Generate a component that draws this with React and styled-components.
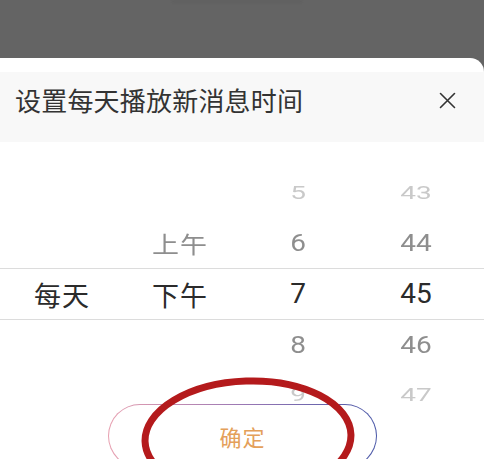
import styled, { createGlobalStyle } from 'styled-components'

const GlobalStyle = createGlobalStyle`
  html, body {
    margin: 0;
    padding: 0;
    background: #646464;
    overflow: hidden;
  }
  body {
    font-family: "Noto Sans CJK SC", "Noto Sans", sans-serif;
  }
`

const Screen = styled.div`
  position: relative;
  width: 484px;
  height: 459px;
  overflow: hidden;
  display: flex;
  flex-direction: column;
`

const Backdrop = styled.div`
  height: 58px;
  flex-shrink: 0;
  background: #646464;
  display: flex;
  justify-content: center;
`

const BackdropEdge = styled.div`
  width: 130px;
  height: 3px;
  margin-left: -10px;
  background: #606060;
  filter: blur(1px);
`

const Sheet = styled.div`
  flex: 1;
  background: #fff;
  border-top-right-radius: 14px;
  padding-top: 14px;
  display: flex;
  flex-direction: column;
`

const Header = styled.div`
  height: 70px;
  box-sizing: border-box;
  background: #f8f8f8;
  padding: 13px 22px 0 15px;
  display: flex;
  align-items: flex-start;
  justify-content: space-between;
`

const Title = styled.div`
  font-size: 26px;
  line-height: 30px;
  color: #333;
  letter-spacing: 0.2px;
`

const Close = styled.div`
  width: 30px;
  height: 30px;
  display: flex;
  align-items: center;
  justify-content: center;
`

const Picker = styled.div`
  padding-top: 26px;
  display: flex;
  flex-direction: column;
`

const Row = styled.div`
  display: grid;
  grid-template-columns: repeat(4, 118px);
  padding-left: 3px;
  height: 50px;
  align-items: center;
  border-top: ${p => (p.$selected ? '1px solid #dcdcdc' : 'none')};
  border-bottom: ${p => (p.$selected ? '1px solid #dcdcdc' : 'none')};
`

// rows further from the centre look squashed, like a wheel
const levels = [
  { color: '#2b2b2b', scale: 1 },
  { color: '#8e8e8e', scale: 0.84 },
  { color: '#c9c9c9', scale: 0.66 },
]

const Cell = styled.div`
  text-align: center;
  color: ${p => levels[p.$level].color};
  font-family: ${p => (p.$num ? 'Roboto, "Noto Sans", sans-serif' : '"Noto Sans CJK SC", sans-serif')};
  font-size: ${p => (p.$num ? 28 : 27)}px;
  font-weight: 400;
  line-height: 1;
  letter-spacing: ${p => (p.$num ? '0' : '1px')};
  transform: scaleY(${p => levels[p.$level].scale});
`

const Footer = styled.div`
  margin-top: -16px;
  display: flex;
  justify-content: center;
  padding-left: 1px;
`

const ConfirmButton = styled.div`
  width: 269px;
  height: 64px;
  box-sizing: border-box;
  border: 1px solid transparent;
  border-radius: 32px;
  background:
    linear-gradient(#fff, #fff) padding-box,
    linear-gradient(90deg, #e8a0b0, #9a78b4 50%, #4a58a8) border-box;
  display: flex;
  justify-content: center;
  padding-top: 18px;
  font-size: 22px;
  line-height: 26px;
  color: #e4a05a;
  letter-spacing: 1px;
`

const Annotation = styled.svg`
  position: absolute;
  left: 138px;
  top: 374px;
  pointer-events: none;
`

const rows = [
  ['', '', '5', '43'],
  ['', '上午', '6', '44'],
  ['每天', '下午', '7', '45'],
  ['', '', '8', '46'],
  ['', '', '9', '47'],
]

export default function App() {
  return (
    <>
      <GlobalStyle />
      <Screen>
        <Backdrop>
          <BackdropEdge />
        </Backdrop>
        <Sheet>
          <Header>
            <Title>设置每天播放新消息时间</Title>
            <Close>
              <svg width="17" height="17" viewBox="0 0 17 17">
                <path d="M1.5 1.5 L15.5 15.5 M15.5 1.5 L1.5 15.5" stroke="#333" strokeWidth="1.6" strokeLinecap="round" />
              </svg>
            </Close>
          </Header>
          <Picker>
            {rows.map((r, i) => {
              const level = Math.min(Math.abs(i - 2), 2)
              return (
                <Row key={i} $selected={i === 2}>
                  {r.map((v, j) => (
                    <Cell key={j} $level={level} $num={j >= 2}>{v}</Cell>
                  ))}
                </Row>
              )
            })}
          </Picker>
          <Footer>
            <ConfirmButton>确定</ConfirmButton>
          </Footer>
        </Sheet>
        <Annotation width="230" height="140" viewBox="0 0 230 140">
          <ellipse
            cx="110"
            cy="64"
            rx="103"
            ry="57"
            fill="none"
            stroke="#b41a1c"
            strokeWidth="7"
            transform="rotate(-2 110 64)"
          />
        </Annotation>
      </Screen>
    </>
  )
}
